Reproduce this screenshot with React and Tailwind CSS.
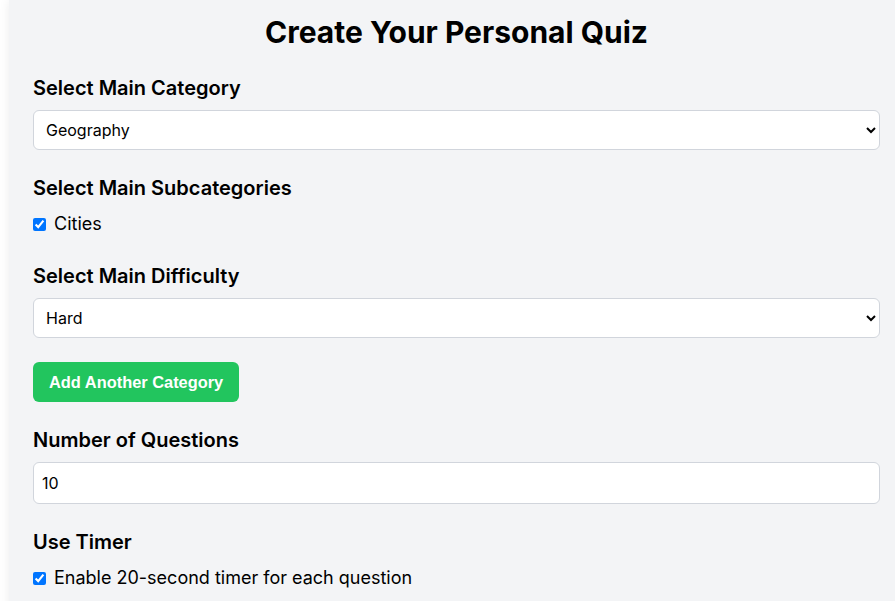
export default function App() {
  return (
    <div className="min-h-screen w-[895px] overflow-hidden bg-white" style={{ fontFamily: 'Inter, "Liberation Sans", sans-serif' }}>
      <div className="ml-[9px] w-[895px] min-h-[601px] bg-gray-100 px-6 pt-[14px] pb-6 shadow-[0_0_10px_rgba(0,0,0,0.08)] text-black">
        <h1 className="mb-6 text-center text-3xl font-bold">Create Your Personal Quiz</h1>

        <div className="space-y-6">
          <div>
            <label className="mb-2 block text-xl font-semibold">Select Main Category</label>
            <select defaultValue="Geography" className="h-10 w-full rounded-md border border-gray-300 bg-white px-2 text-base">
              <option>Geography</option>
              <option>History</option>
              <option>Science</option>
            </select>
          </div>

          <div>
            <label className="mb-2 block text-xl font-semibold">Select Main Subcategories</label>
            <label className="flex items-center text-lg">
              <input type="checkbox" defaultChecked className="mr-2 h-[13px] w-[13px]" />
              Cities
            </label>
          </div>

          <div>
            <label className="mb-2 block text-xl font-semibold">Select Main Difficulty</label>
            <select defaultValue="Hard" className="h-10 w-full rounded-md border border-gray-300 bg-white px-2 text-base">
              <option>Easy</option>
              <option>Medium</option>
              <option>Hard</option>
            </select>
          </div>

          <button
            className="h-10 rounded-md bg-[#22c55e] px-4 text-[16.4px] font-bold text-white"
            style={{ fontFamily: '"Liberation Sans", Arial, sans-serif' }}
          >
            Add Another Category
          </button>

          <div>
            <label className="mb-2 block text-xl font-semibold">Number of Questions</label>
            <input type="number" defaultValue={10} className="h-[42px] w-full rounded-md border border-gray-300 bg-white px-2 text-base" />
          </div>

          <div>
            <label className="mb-2 block text-xl font-semibold">Use Timer</label>
            <label className="flex items-center text-lg">
              <input type="checkbox" defaultChecked className="mr-2 h-[13px] w-[13px]" />
              Enable 20-second timer for each question
            </label>
          </div>
        </div>
      </div>
    </div>
  );
}
